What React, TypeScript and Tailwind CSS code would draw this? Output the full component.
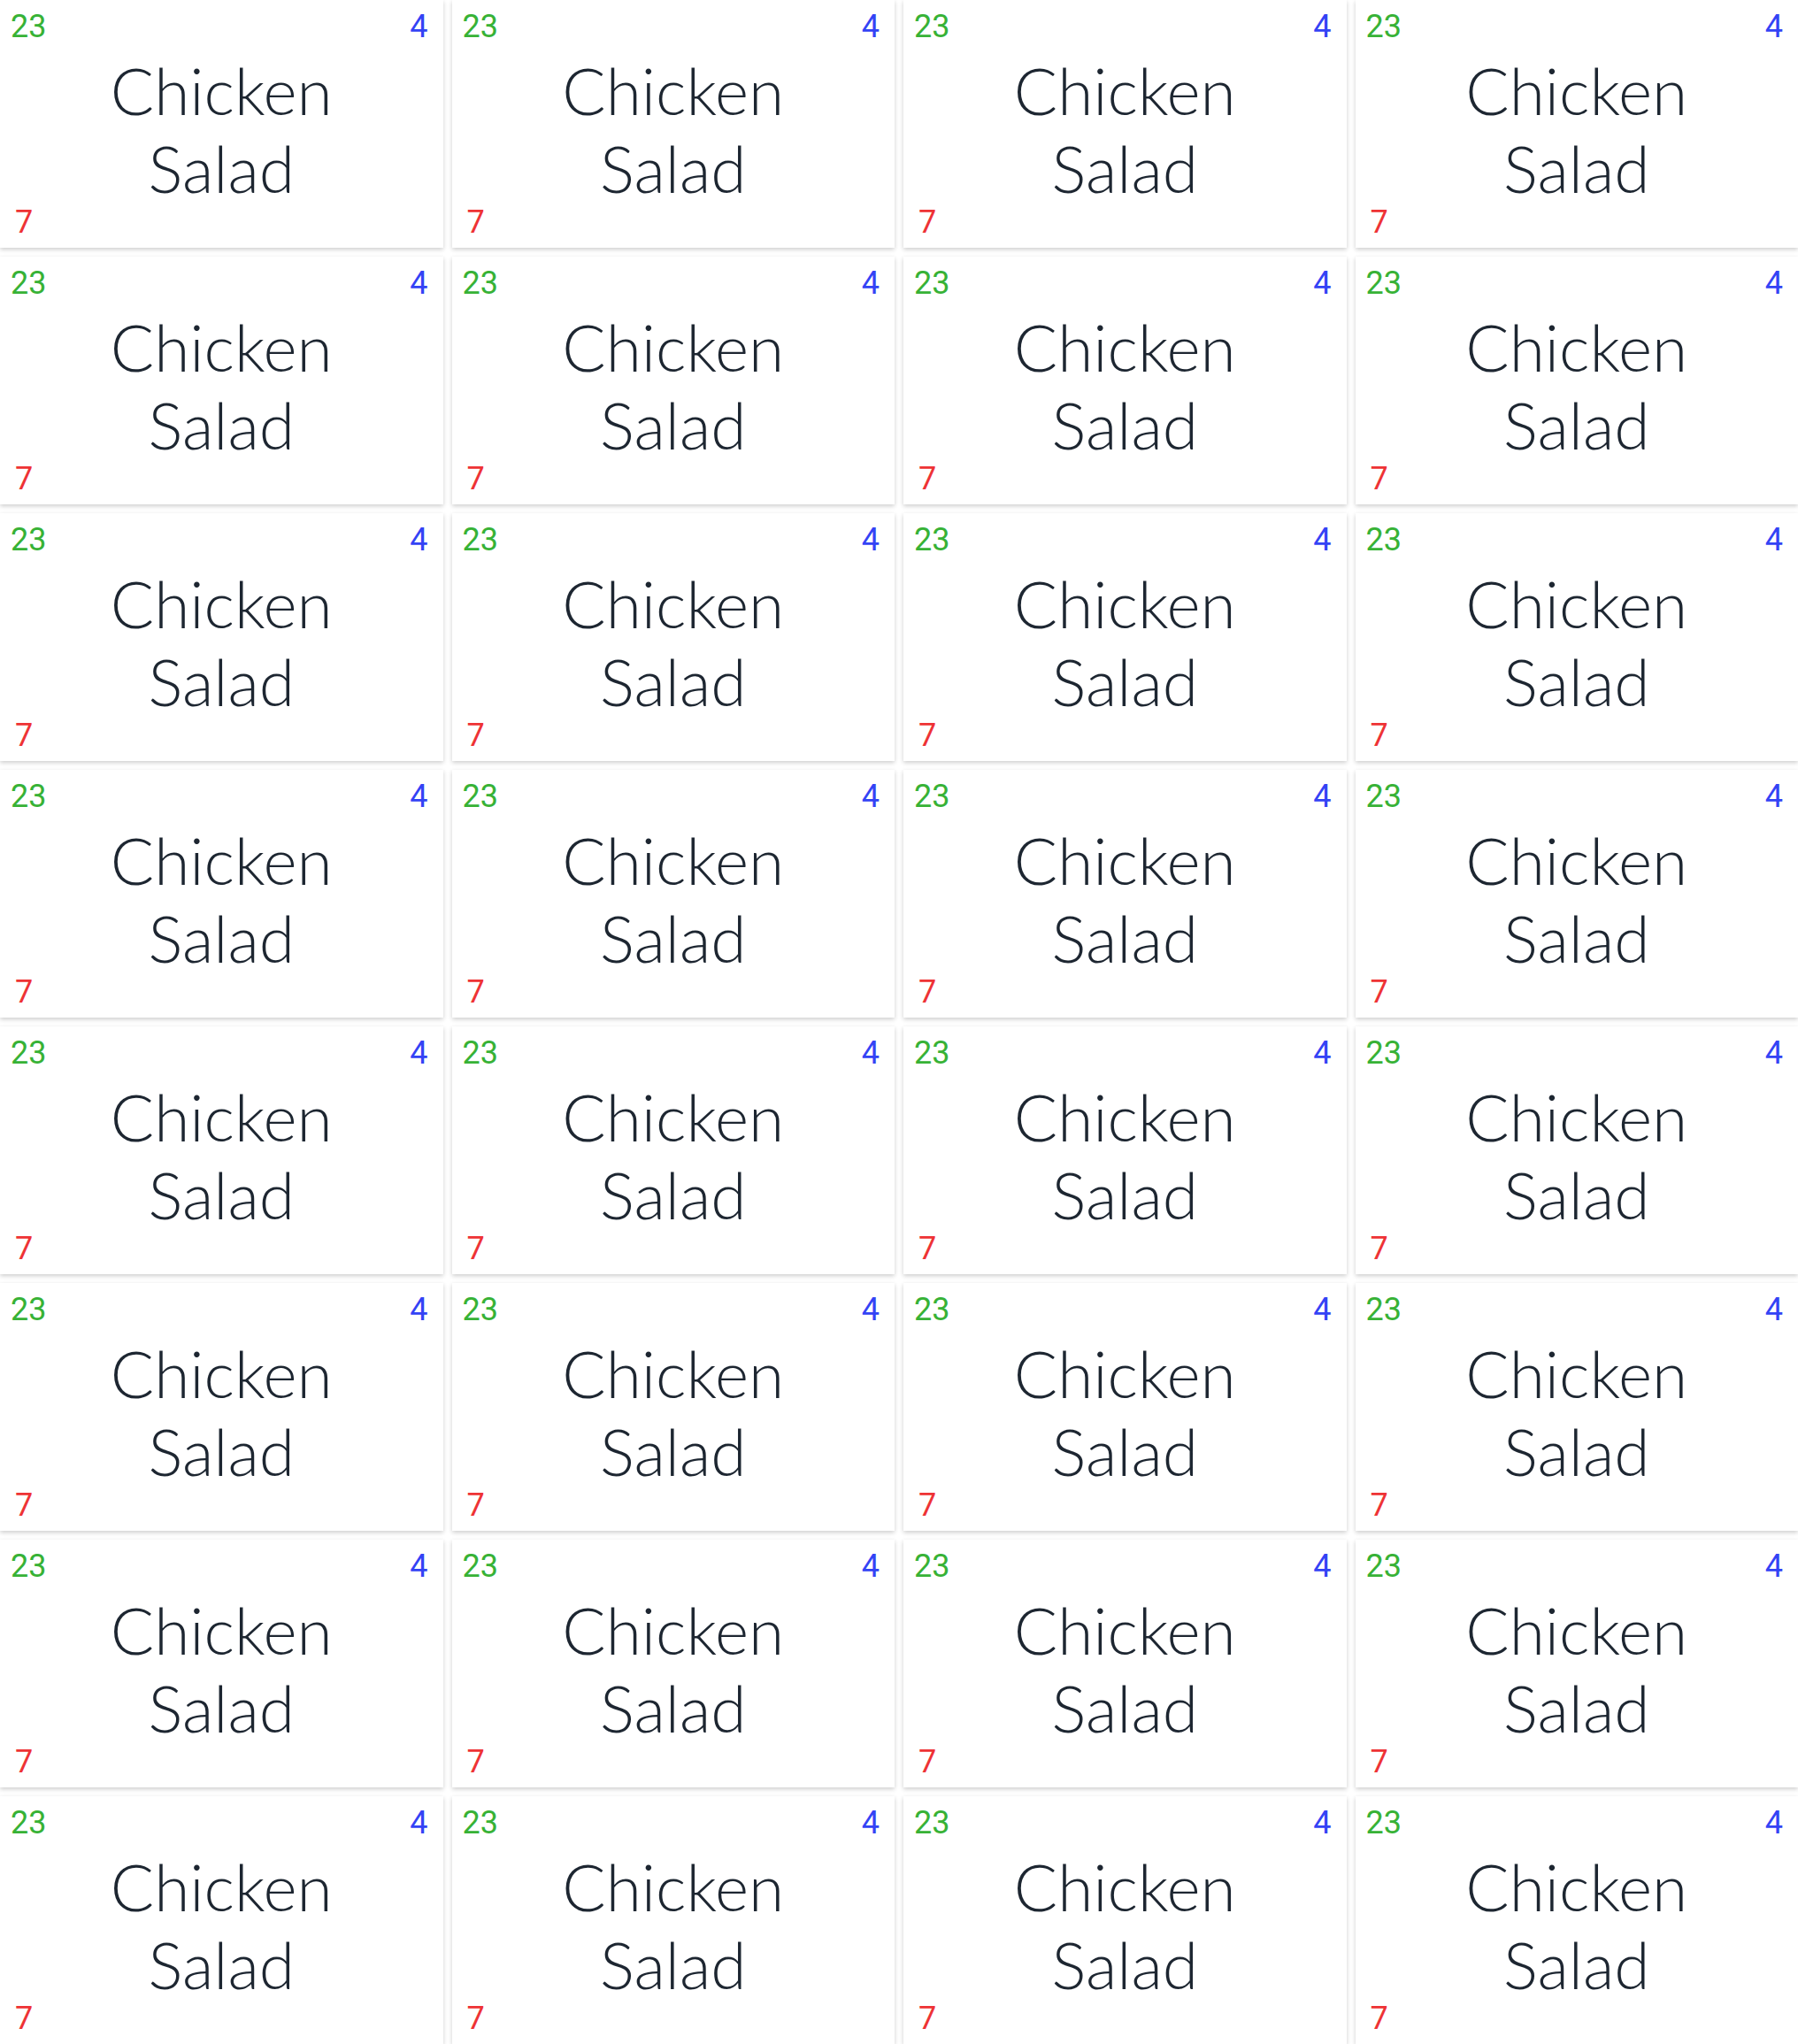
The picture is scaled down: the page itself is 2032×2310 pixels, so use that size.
const cards = Array.from({ length: 32 }, (_, i) => ({
  id: i,
  name: "Chicken Salad",
  count: 23,
  table: 4,
  late: 7,
}));

function Card({ name, count, table, late }: { name: string; count: number; table: number; late: number }) {
  return (
    <div className="flex h-[280px] flex-col overflow-hidden bg-white pb-[11px] pt-[12px] shadow-[0_2px_5px_rgba(0,0,0,0.2)]">
      {/* top corners */}
      <div className="flex h-[36px] items-start justify-between pl-[12px] pr-[17px] font-['Roboto',sans-serif] text-[36px] leading-[36px]">
        <span className="text-[#37b236]">{count}</span>
        <span className="text-[#3343f5]">{table}</span>
      </div>

      <div className="mt-[11px] h-[170px] text-center font-['Lato',sans-serif] text-[73px] font-light leading-[1.2] text-[#1d2631]">
        {name.split(" ").map((w) => (
          <div key={w}>{w}</div>
        ))}
      </div>

      <div className="mt-auto h-[36px] pl-[17px] font-['Roboto',sans-serif] text-[36px] leading-[36px] text-[#ee3335]">
        {late}
      </div>
    </div>
  );
}

export default function App() {
  return (
    <div className="grid w-[2032px] grid-cols-4 gap-[10px] bg-white">
      {cards.map((c) => (
        <Card key={c.id} name={c.name} count={c.count} table={c.table} late={c.late} />
      ))}
    </div>
  );
}
